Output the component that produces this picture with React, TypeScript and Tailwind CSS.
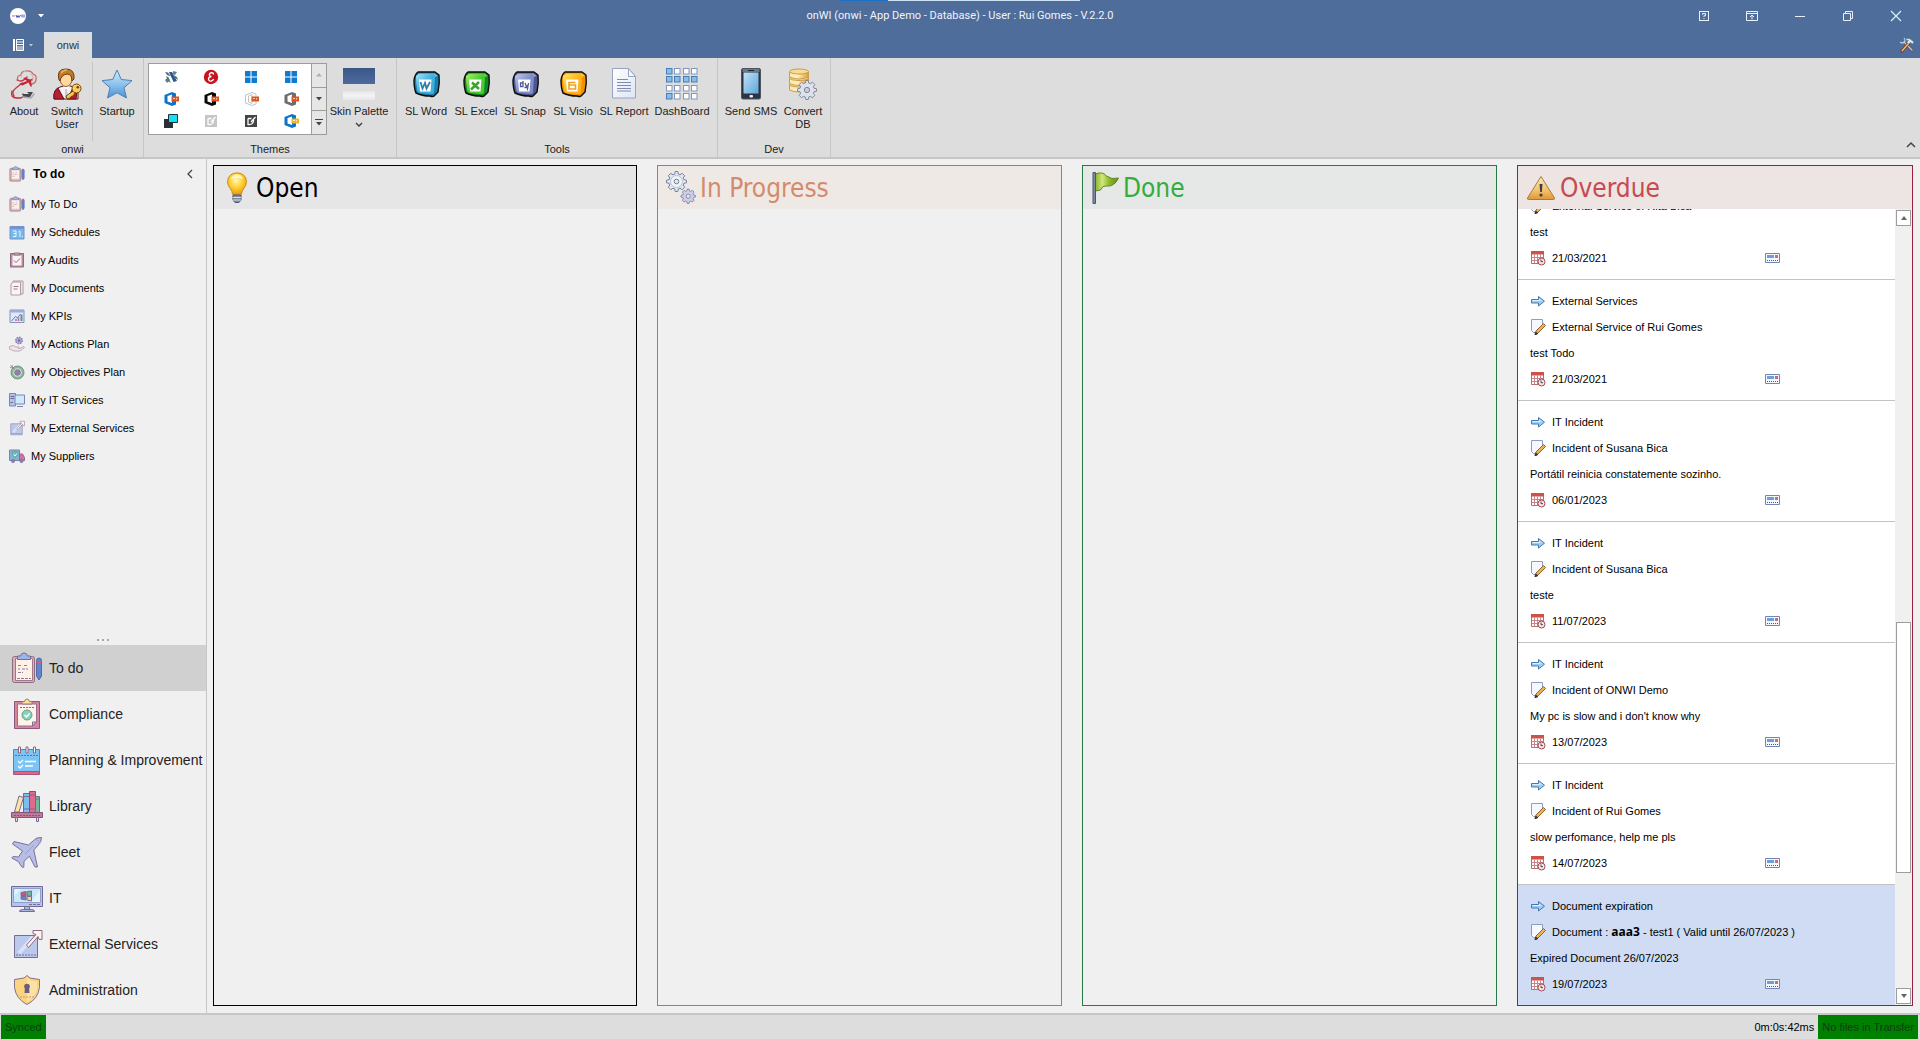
import { useState, type ReactNode } from 'react';
import clsx from 'clsx';

/* ---------- Title bar icons ---------- */

const HelpIcon = () => (
  <svg width="12" height="12" viewBox="0 0 12 12" fill="none" stroke="#e8f1fa">
    <rect x="1.5" y="1.5" width="9" height="9" />
    <path d="M4.5 4.8V3.5h3v2.2H6V7M6 8v1" />
  </svg>
);

const RibbonModeIcon = () => (
  <svg width="12" height="12" viewBox="0 0 12 12" fill="none" stroke="#e8f1fa">
    <path d="M.5 1.5h11v9H.5zM.5 3.5h11M6 9.5V5M4 7l2-2 2 2" />
  </svg>
);

const MinimizeIcon = () => (
  <svg width="12" height="12" viewBox="0 0 12 12" stroke="#e8f1fa">
    <path d="M1 6.5h10" />
  </svg>
);

const RestoreIcon = () => (
  <svg width="12" height="12" viewBox="0 0 12 12" fill="none" stroke="#e8f1fa">
    <path d="M1.5 3.5h7v7h-7zM3.5 3.5v-2h7v7h-2" />
  </svg>
);

const CloseIcon = () => (
  <svg width="12" height="12" viewBox="0 0 12 12" stroke="#d8f2fa" strokeWidth="1.2">
    <path d="M1 1l10 10M11 1L1 11" />
  </svg>
);

const ToolsIcon = () => (
  <svg width="16" height="16" viewBox="0 0 16 16" strokeLinecap="round">
    <path d="M5 5l8 8" stroke="#6b4a52" strokeWidth="2.6" />
    <path d="M5 5l8 8" stroke="#c8c9d8" strokeWidth="1.3" />
    <path d="M1.5 5.5L4 6l2-2-.6-2.6" fill="none" stroke="#a9cfdd" strokeWidth="1.4" />
    <path d="M10 6l-7 8" stroke="#7b3a1c" strokeWidth="3" />
    <path d="M10 6l-6.800 7.800" stroke="#f5bd74" strokeWidth="1.400" />
    <path d="M6 2.500q4-2.500 7 1l2 1.500-1.500 2-2-1.600L9.500 7 8 5.500l1.200-1.700z" fill="#dff0f4" stroke="#5c7480" strokeWidth=".6" />
  </svg>
);

/* ---------- Ribbon icons ---------- */

const AboutIcon = () => (
  <svg width="32" height="32" viewBox="0 0 32 32" fill="none" strokeLinecap="round">
    <path d="M10 12q-2-4 3-5 0-4 5-4 5-1 7 3 4 1 3 6-1 4-5 4" stroke="#c4656b" strokeWidth="1.200" />
    <path d="M18 3q-5 1-5 6M23 6q4 3 1 8" stroke="#dca0a4" />
    <path d="M9 12q5 3 10-3M6 28q-3-4 2-8t6-5" stroke="#c53a46" strokeWidth="1.400" />
    <path d="M4 23q-2 7 5 7h4q4-2 2-4" stroke="#b92c3d" strokeWidth="1.300" />
    <path d="M11 16l8-3-4-3 2-.500 5 2 3-1-2 3 1 5-1.500 0-2-4-6 3z" fill="#c22736" />
    <path d="M14 26l7 0-2-2 6 0-3 5-5 1z" fill="#44464e" />
    <path d="M15 29l8 1 3-4" stroke="#a8a9ae" strokeWidth="1.600" />
  </svg>
);

const SwitchUserIcon = () => (
  <svg width="32" height="32" viewBox="0 0 32 32">
    <path d="M3 31q-1-10 6-12l4-1h6q7 1 8 6v7z" fill="#f2f2f5" stroke="#5e1420" />
    <path d="M3 31q-1-8 4-11l6 11zM25 31l1-8-4-3-6 11z" fill="#b51e35" stroke="#6e0f1e" />
    <path d="M12 18l3 4 4-4-3-2z" fill="#fff" />
    <path d="M14 21l2 0 1 8-2 2-1-2z" fill="#c9cad4" />
    <ellipse cx="15" cy="11" rx="6" ry="7.500" fill="#ffd9a0" stroke="#9a5a1e" />
    <path d="M8 12Q5 1 15 1q9 0 8 10l-2 2Q21 6 16 6 10 7 9 13z" fill="#c27a2b" stroke="#6c3a10" />
    <path d="M10 5q2-3 6-3" stroke="#eab25e" strokeWidth="1.500" fill="none" />
    <path d="M22 23l-7 5 1 3 3-1 1-1.500 2-.5 2-3" fill="#f7c552" stroke="#75440b" />
    <circle cx="25.500" cy="20.500" r="4.500" fill="#f9cd62" stroke="#75440b" />
    <circle cx="26.800" cy="19.200" r="1.300" fill="#6f430f" />
  </svg>
);

const StarIcon = () => (
  <svg width="32" height="32" viewBox="0 0 32 32">
    <defs>
      <linearGradient id="star" x1="0" y1="0" x2="0" y2="1">
        <stop offset="0" stopColor="#d2ebfb" />
        <stop offset=".5" stopColor="#8fc3ec" />
        <stop offset="1" stopColor="#4b93d6" />
      </linearGradient>
    </defs>
    <path d="M16 2l4.300 9.500L31 12.600l-8 7.200L25.500 30 16 24.800 6.500 30 9 19.800l-8-7.200 10.700-1.100z" fill="url(#star)" stroke="#4d7fb8" strokeLinejoin="round" />
  </svg>
);

function BlobIcon({ id, light, mid, dark, children }: { id: string; light: string; mid: string; dark: string; children: ReactNode }) {
  return (
    <svg width="32" height="32" viewBox="0 0 32 32">
      <defs>
        <linearGradient id={id} x1="0" y1="0" x2="1" y2="1">
          <stop offset="0" stopColor={light} />
          <stop offset=".5" stopColor={mid} />
          <stop offset="1" stopColor={mid} />
        </linearGradient>
      </defs>
      <path d="M8 4h17l4 3q1 8-1 17l-4 4q-1 1-4 0-8 0-14-3-2-5-2-13 1-6 4-8z" fill={dark} stroke="#0c0c0c" strokeWidth="1.400" strokeLinejoin="round" />
      <path d="M8.500 5.500h16l3 2.500-3 1H7z" fill={light} opacity=".7" />
      <path d="M6 8q2-2 5-2h12q2 0 2 3l-1 15q0 2-3 2l-11-1q-3-1-3-4-1-7-1-13z" fill={`url(#${id})`} />
      <path d="M9 11.500h12.500l-1 12H10z" fill="#fff" />
      {children}
    </svg>
  );
}

const WordIcon = () => (
  <BlobIcon id="word" light="#a4e2f8" mid="#3fb0dc" dark="#1a7fae">
    <path d="M10.500 14l2 6.500 2.500-5.500 1.500 5.500 3.500-6.500" fill="none" stroke="#2b7fa8" strokeWidth="1.800" />
  </BlobIcon>
);

const ExcelIcon = () => (
  <BlobIcon id="excel" light="#a8f266" mid="#48cb32" dark="#128a20">
    <path d="M12 14.500l7 6.500M19 14l-8 7.500" fill="none" stroke="#3da32c" strokeWidth="2.500" />
  </BlobIcon>
);

const SnapIcon = () => (
  <BlobIcon id="snap" light="#c0c9f0" mid="#7f8cc6" dark="#4c568c">
    <path d="M14 15h-2.500v3.500H14zM14 13v6M16 15l2.500 6 1-6M15.500 20l4-3" fill="none" stroke="#4f5c98" strokeWidth="1.300" />
  </BlobIcon>
);

const VisioIcon = () => (
  <BlobIcon id="visio" light="#ffe468" mid="#ffb41c" dark="#f09200">
    <path d="M18.500 14.500h-6.500v6.500h6.500v-4h-3.500M12 17h3" fill="none" stroke="#eda21c" strokeWidth="1.600" />
  </BlobIcon>
);

const ReportIcon = () => (
  <svg width="32" height="32" viewBox="0 0 32 32">
    <defs>
      <linearGradient id="paper" x1="0" y1="0" x2="1" y2="1">
        <stop offset="0" stopColor="#ffffff" />
        <stop offset="1" stopColor="#dfe5f6" />
      </linearGradient>
    </defs>
    <path d="M4.500 .5h16l7 8v21.500h-23z" fill="url(#paper)" stroke="#98a2c2" />
    <path d="M20.500 .5l7 8h-7z" fill="#f4f6fc" stroke="#98a2c2" />
    <path d="M9 11.500h11M9 14.500h14M9 17.500h14M9 20.500h14M9 23h14" stroke="#7a8cb0" />
  </svg>
);

const DashboardIcon = () => {
  const cells = ['bwww', 'bbbb', 'wwww', 'bwww'];
  const xs = [0.5, 8.5, 17.5, 25.5];
  const ys = [0.5, 8.5, 17.5, 25.5];
  return (
    <svg width="32" height="32" viewBox="0 0 32 32">
      {cells.map((row, r) =>
        row.split('').map((cell, c) => (
          <rect key={`${r}${c}`} x={xs[c]} y={ys[r]} width="5.500" height="5.500" fill={cell === 'b' ? '#86bdea' : '#fff'} stroke={cell === 'b' ? '#4a7db4' : '#8196bd'} />
        ))
      )}
    </svg>
  );
};

const PhoneIcon = () => (
  <svg width="32" height="32" viewBox="0 0 32 32">
    <defs>
      <linearGradient id="screen" x1="0" y1="0" x2="1" y2="1">
        <stop offset="0" stopColor="#bfe3f8" />
        <stop offset="1" stopColor="#5fa5d8" />
      </linearGradient>
    </defs>
    <rect x="6.500" y=".5" width="19" height="30.500" rx="1.500" fill="#2d3340" stroke="#4c5464" />
    <rect x="7.500" y="1" width="17" height="3" fill="#6d7586" />
    <rect x="8.500" y="4.500" width="15" height="21" fill="url(#screen)" />
    <path d="M13 2.500h6" stroke="#20242c" />
    <rect x="14.500" y="27" width="3.500" height="2.500" rx="1" fill="#eee" />
  </svg>
);

const GEAR_D =
  'M8.700 0h2.600l.5 2.600 1.700.7L15.700 1.800l2.500 2.500-1.500 2.200.7 1.700 2.600.5v2.600l-2.600.5-.7 1.700 1.500 2.200-2.500 2.500-2.200-1.500-1.700.7-.5 2.600H8.700l-.5-2.600-1.700-.7-2.200 1.500-2.500-2.500 1.500-2.200-.7-1.700L0 11.300V8.700l2.600-.5.7-1.700L1.800 4.300l2.500-2.500 2.200 1.500 1.700-.7z';

const ConvertDbIcon = () => (
  <svg width="32" height="32" viewBox="0 0 32 32">
    <defs>
      <linearGradient id="db" x1="0" y1="0" x2="1" y2="0">
        <stop offset="0" stopColor="#fbe6a8" />
        <stop offset=".4" stopColor="#fff2c8" />
        <stop offset="1" stopColor="#dd9d35" />
      </linearGradient>
    </defs>
    {[16.500, 10, 3.500].map((y) => (
      <g key={y} stroke="#cf9a48">
        <path d={`M2.500 ${y}v5.500q9 4 19 0v-5.500z`} fill="url(#db)" />
        <ellipse cx="12" cy={y} rx="9.500" ry="2.500" fill="#f7dc95" />
      </g>
    ))}
    <g transform="translate(10.500 12.500) scale(.95)">
      <path d={GEAR_D} fill="#dde1ec" stroke="#7c849c" />
      <circle cx="10" cy="10" r="2.800" fill="#c7ccda" stroke="#7c849c" />
    </g>
  </svg>
);

const PaletteIcon = () => (
  <svg width="32" height="32" viewBox="0 0 32 32">
    <defs>
      <linearGradient id="fade" x1="0" y1="0" x2="0" y2="1">
        <stop offset="0" stopColor="#e6e6e6" />
        <stop offset=".5" stopColor="#f3f3f3" />
        <stop offset="1" stopColor="#e6e6e6" />
      </linearGradient>
      <linearGradient id="navy" x1="0" y1="0" x2="0" y2="1">
        <stop offset="0" stopColor="#3a5788" />
        <stop offset="1" stopColor="#4c6b9c" />
      </linearGradient>
    </defs>
    <path d="M0 0h32v16H0z" fill="url(#navy)" />
    <path d="M0 16h32v7H0z" fill="#dedede" />
    <path d="M0 23h32v9H0z" fill="url(#fade)" />
  </svg>
);

/* ---------- Skin gallery glyphs ---------- */

const DxSkin = () => (
  <svg width="16" height="16" viewBox="0 0 16 16">
    <path d="M2 3l3 .5 3 4L4 6z" fill="#5d6c8a" />
    <path d="M6 3l3 0 5 9-3.500 1z" fill="#28588f" />
    <path d="M10 2l4 1-2 3-2-1zM2 11l3-3 2 3-3 3z" fill="#6c7a92" />
    <path d="M3 7l2 1 3 6-3-2zM11 6l3 2 1 3-3-2z" fill="#4d7a6e" />
  </svg>
);

const RedSkin = () => (
  <svg width="16" height="16" viewBox="0 0 16 16" fill="none" stroke="#fff" strokeWidth="1.400">
    <circle cx="8" cy="8" r="7.200" fill="#c7141f" stroke="none" />
    <path d="M10.500 5.500q0-2-2-1.800-2.500.7-2 2.800.5 1 2 1-3 .3-3 2.500.3 2.500 2.800 2 1.800-.5 2.300-2" />
  </svg>
);

const WindowsSkin = () => (
  <svg width="16" height="16" viewBox="0 0 16 16" fill="#0f7bd0">
    <path d="M2 2h5.500v5.500H2zM8.500 2H14v5.500H8.500zM2 8.500h5.500V14H2zM8.500 8.500H14V14H8.500z" />
  </svg>
);

const OfficeSkin = ({ color, badge, outline }: { color: string; badge: string; outline?: boolean }) => (
  <svg width="16" height="16" viewBox="0 0 16 16">
    {outline ? (
      <path d="M2.500 4L9 1.500l4 1.500v10L9 14.500 2.500 12zM5.500 5v6L9 12.500v-9z" fill="#fff" stroke={color} />
    ) : (
      <path d="M1.500 4L9 1l4 1.500v11L9 15l-7.500-3zM4.500 5v5.500L9 12V3.500z" fill={color} fillRule="evenodd" />
    )}
    <path d="M8.500 5.500H16v5H8.500z" fill={badge} />
    <path d="M10 7.500h2M13.500 7v1.500" stroke="#fff" opacity=".7" />
  </svg>
);

const SquaresSkin = () => (
  <svg width="16" height="16" viewBox="0 0 16 16">
    <path d="M1 6h9v9H1z" fill="#2c2f33" />
    <path d="M5.500 1.500h9v8h-9z" fill="#15dff2" stroke="#1c3438" />
  </svg>
);

const NoteSkin = ({ color }: { color: string }) => (
  <svg width="16" height="16" viewBox="0 0 16 16" fill="none">
    <path d="M2 2h12v12H2z" fill={color} />
    <path d="M5 5.500v6q5 .5 5.500-3.500V7M5 5.500h3.500M8 9l4.500-5" stroke="#fff" strokeWidth="1.300" />
  </svg>
);

const skins = [
  { name: 'DX', icon: <DxSkin /> },
  { name: 'Red', icon: <RedSkin /> },
  { name: 'Windows', icon: <WindowsSkin /> },
  { name: 'Windows Light', icon: <WindowsSkin /> },
  { name: 'Office Colorful', icon: <OfficeSkin color="#0f74c8" badge="#e2521e" /> },
  { name: 'Office Black', icon: <OfficeSkin color="#0a0a0a" badge="#e2521e" /> },
  { name: 'Office White', icon: <OfficeSkin color="#c2c2c2" badge="#e2521e" outline /> },
  { name: 'Office Dark', icon: <OfficeSkin color="#6d6d6d" badge="#e2521e" /> },
  { name: 'Squares', icon: <SquaresSkin /> },
  { name: 'Note Light', icon: <NoteSkin color="#c6c6c6" /> },
  { name: 'Note Dark', icon: <NoteSkin color="#444444" /> },
  { name: 'Office Yellow', icon: <OfficeSkin color="#0f74c8" badge="#efb52b" /> },
];

/* ---------- Navigation icons, shared by the small and large lists ---------- */

const INK = '#7d6a93';

function NavSvg({ size, children }: { size: number; children: ReactNode }) {
  return (
    <svg width={size} height={size} viewBox="0 0 32 32" fill="none" stroke={INK} strokeLinejoin="round" className="shrink-0">
      {children}
    </svg>
  );
}

const TodoIcon = ({ size = 32 }: { size?: number }) => (
  <NavSvg size={size}>
    <rect x="1.500" y="4.500" width="22" height="26" rx="2" fill="#d6b3b5" stroke="#8c6a80" />
    <path d="M4.500 6.500h17v22h-17z" fill="#fff1e6" stroke="#a37886" />
    <path d="M6.500 7.500V4h3q.5-3 3.500-3t3.500 3h3v3.500z" fill="#9db6e8" />
    <path d="M7 13.500h4M13 13.500h4M7 17h2M11 17h6M7 20.500h5M6 26.500h14" stroke="#8c7aa0" strokeDasharray="3 1" />
    <path d="M25.500 9q0-3 2.500-3t2.500 3v15L28 28l-2.500-4z" fill="#5f86cf" stroke="#56669e" />
    <path d="M25.500 10h5" stroke="#d0607c" strokeWidth="2" />
  </NavSvg>
);

const ComplianceIcon = ({ size = 32 }: { size?: number }) => (
  <NavSvg size={size}>
    <path d="M3.500 3.500h25v27h-25z" fill="#d983a0" stroke="#8d5a7e" />
    <path d="M6.500 6h19v18l-4 4h-15z" fill="#fff4e8" stroke="#97718f" />
    <path d="M25.500 24h-4v4z" fill="#f0c6b8" />
    <path d="M11 6V3.500h2.500Q14 1 16 1t2.500 2.500H21V6z" fill="#ffdf9c" stroke="#9b7480" />
    <path d="M9 9.500h14" strokeDasharray="2 1" />
    <circle cx="16" cy="17" r="5" fill="#86d3b6" stroke="#6a9aa0" />
    <path d="M13.500 17l2 2 3-3.500" stroke="#fff" strokeWidth="1.500" />
  </NavSvg>
);

const PlanningIcon = ({ size = 32 }: { size?: number }) => (
  <NavSvg size={size}>
    <path d="M2.500 5.500h26v25h-26z" fill="#7cc4f5" stroke="#6a7bb5" />
    <path d="M3 27.500h25v3H3z" fill="#e5637f" stroke="#a3577e" />
    <path d="M4 11.500h24" stroke="#5671ad" strokeDasharray="2 1" />
    <path d="M7.500 3h2v6h-2zM15 3h2v6h-2zM22.500 3h2v6h-2z" fill="#fff" stroke="#8d6480" />
    <path d="M7 17l2 2 3-3M7 22l2 2 3-3M14 17.500h11M14 22h8" stroke="#fff" strokeWidth="1.300" />
  </NavSvg>
);

const LibraryIcon = ({ size = 32 }: { size?: number }) => (
  <NavSvg size={size}>
    <path d="M8 6l4.500 1.500L8 22H3.500z" fill="#fae6a2" />
    <path d="M12.500 3.500h6v19h-6z" fill="#77c0f2" stroke="#5870a8" />
    <path d="M18.500 1.500h6v21h-6z" fill="#e2688c" stroke="#8c4a78" />
    <path d="M24.500 6.500h4v16h-4z" fill="#6fb99f" stroke="#517b80" />
    <path d="M13 6.500h5M13 19h5M19 5h5M19 19h5M25 9h4" />
    <path d="M.5 22.500h31v5H.5z" fill="#c07898" stroke="#84547c" />
    <path d="M3 25.500h26" stroke="#84547c" strokeDasharray="2 1" />
    <path d="M4.500 27.500h2v4h-2zM25.500 27.500h2v4h-2z" fill="#f0d8da" />
  </NavSvg>
);

const FleetIcon = ({ size = 32 }: { size?: number }) => (
  <NavSvg size={size}>
    <path d="M30.500 1.500q-5-.5-8 3l-5 4.500L3 5.500 1.500 8l10 7-4 6L2 20.500.8 22l6.500 3.500L11 31.200h1.800l.2-6 5.500-5L24 31h2.500L22.800 14l4.500-5q3.500-4 3.200-7.500z" fill="#b7bee6" stroke="#7b6f98" />
    <path d="M14 18l9-9" stroke="#8f8fc0" strokeDasharray="2 1" />
    <path d="M24 3q4 1 5 5" stroke="#8fa4d8" />
  </NavSvg>
);

const ItIcon = ({ size = 32 }: { size?: number }) => (
  <NavSvg size={size}>
    <path d="M.5 4.500h31v20H.5z" fill="#b5c4ec" stroke="#71699c" />
    <path d="M2.500 6.500h27v14h-27z" fill="#c9e9fa" stroke="#8fa0cc" />
    <path d="M20 20L29 8v12zM3 14l7-7H4z" fill="#e4f5fd" stroke="none" />
    <path d="M10 10.500l5-1v4h-5z" fill="#c65c7c" />
    <path d="M16 9.500l4.500-.5v5H16z" fill="#6ab79a" />
    <path d="M10 14.500h5V18l-5-1z" fill="#6c86c6" />
    <path d="M16 14.500h4.500V19L16 18z" fill="#f5d49a" />
    <path d="M13.500 24.500h5v3h-5zM8.500 29.500q0-2 3-2h9q3 0 3 2z" fill="#a9b6e0" />
    <path d="M18 22.500h11" strokeDasharray="3 1" />
  </NavSvg>
);

const ExternalIcon = ({ size = 32 }: { size?: number }) => (
  <NavSvg size={size}>
    <path d="M3.500 7.500h23v22h-23z" fill="#bcc8ec" stroke="#756c9c" />
    <path d="M8 25L22 9" stroke="#d8e2f8" strokeWidth="4" />
    <path d="M5 27h20" strokeDasharray="2 1" />
    <path d="M15.500 17L25 6.500l-3-1V2.500h9v9l-3-.2-1-2.800-9.500 11z" fill="#fff3ea" stroke="#8b6886" />
  </NavSvg>
);

const AdminIcon = ({ size = 32 }: { size?: number }) => (
  <NavSvg size={size}>
    <path d="M16 1.500l3 2.500 9.500 1.500v8Q27 25 16 30.500 5 25 3.500 13.500v-8L13 4z" fill="#fad480" stroke="#85708e" />
    <path d="M16 4l3 2.500 7 1v6Q25 23 16 28z" fill="#fbe2a6" stroke="none" />
    <circle cx="16" cy="12.500" r="2.800" fill="#6c5c80" stroke="none" />
    <path d="M14 13h4l.5 6h-5z" fill="#6c5c80" stroke="none" />
    <path d="M9 23h14" stroke="#c09a74" strokeDasharray="2 1" />
  </NavSvg>
);

const ScheduleIcon = () => (
  <NavSvg size={16}>
    <path d="M2 5h28v25H2z" fill="#74b9ec" stroke="#6c96cf" strokeWidth="2" />
    <path d="M2 5h28v5H2z" fill="#7c8fcf" stroke="none" />
    <path d="M8 14h6v11H8M9 19h5M19 16l3-2v12M26 25h2" stroke="#e8f6ff" strokeWidth="2" />
  </NavSvg>
);

const AuditIcon = () => (
  <NavSvg size={16}>
    <path d="M3 3h26v27H3z" fill="#b98fa5" stroke="#8f6a84" strokeWidth="2" />
    <path d="M7 7h18v20H7z" fill="#fbf1ee" stroke="none" />
    <path d="M11 6V2h10v4z" fill="#d9c0a8" stroke="#8f6a84" strokeWidth="2" />
    <path d="M10 17l4 4 8-8" stroke="#7d7490" strokeWidth="2" />
  </NavSvg>
);

const DocumentsIcon = () => (
  <NavSvg size={16}>
    <path d="M8 2h20v26H8z" fill="#efe6e4" stroke="#b29aa6" strokeWidth="2" />
    <path d="M4 8l5-4h14v26H4z" fill="#fbf5f2" stroke="#b29aa6" strokeWidth="2" />
    <path d="M9 13h10M9 18h8" stroke="#8e8098" strokeWidth="2" />
  </NavSvg>
);

const KpiIcon = () => (
  <NavSvg size={16}>
    <path d="M2 4h28v25H2z" fill="#dfe8fa" stroke="#8890bf" strokeWidth="2" />
    <path d="M2 4h28v5H2z" fill="#a2a9d8" stroke="none" />
    <path d="M5 26l8-9 4 3 6-8" stroke="#6d78b5" strokeWidth="2" />
    <path d="M14 26v-4M19 26v-7" stroke="#bb6f8e" strokeWidth="3" />
    <path d="M25 26V13" stroke="#5c9a86" strokeWidth="4" />
  </NavSvg>
);

const ActionsIcon = () => (
  <NavSvg size={16}>
    <circle cx="20" cy="9" r="6.500" fill="#b3acd6" stroke="#857cac" strokeWidth="3" strokeDasharray="3 2" />
    <circle cx="20" cy="9" r="2.500" fill="#77709e" stroke="none" />
    <path d="M1 21l7-2 6 3h6l-1 3h3l7-4 2 2-9 7-12 0-9-4z" fill="#f5e4e0" stroke="#a39ab2" strokeWidth="1.500" />
  </NavSvg>
);

const ObjectivesIcon = () => (
  <NavSvg size={16}>
    <circle cx="17" cy="17" r="13" fill="#8fb8a3" stroke="#75947f" strokeWidth="2" />
    <circle cx="17" cy="17" r="9" fill="#e0e8d8" stroke="#7fa08c" />
    <circle cx="17" cy="17" r="6" fill="#8d80a6" stroke="#68708c" />
    <path d="M3 3l13 13M2 7l5 1-1-6" stroke="#b3868e" strokeWidth="2" />
  </NavSvg>
);

const ServicesIcon = () => (
  <NavSvg size={16}>
    <path d="M1 3h12v25H1z" fill="#b5c2ea" stroke="#7a84b8" strokeWidth="2" />
    <path d="M3 9h7M3 13h7M3 21h5" stroke="#616a9c" strokeWidth="2" />
    <path d="M12 6h19v18H12z" fill="#cdeafa" stroke="#7a84b8" strokeWidth="2" />
    <path d="M16 29h12" stroke="#7a84b8" strokeWidth="2" />
  </NavSvg>
);

const SuppliersIcon = () => (
  <NavSvg size={16}>
    <path d="M1 4h20v21H1z" fill="#7fb2dd" stroke="#7686b8" strokeWidth="2" />
    <path d="M6 8q5 0 6-1 1 1 6 1 0 9-6 12-6-3-6-12z" fill="#74bda0" stroke="#5f8f94" />
    <path d="M9 13l3 3 4-5" stroke="#fff" strokeWidth="2" />
    <path d="M21 12h6l4 7v6H21z" fill="#c9789a" stroke="#95658c" strokeWidth="2" />
    <circle cx="8" cy="26" r="3.500" fill="#8a80a6" />
    <circle cx="25" cy="26" r="3.500" fill="#8a80a6" />
  </NavSvg>
);

/* ---------- Board icons ---------- */

const BulbIcon = () => (
  <svg width="22" height="32" viewBox="0 0 22 32">
    <defs>
      <radialGradient id="bulb" cx=".45" cy=".35" r=".7">
        <stop offset="0" stopColor="#fff8b8" />
        <stop offset=".5" stopColor="#fdd02f" />
        <stop offset="1" stopColor="#e8960c" />
      </radialGradient>
    </defs>
    <path d="M11 .8q-9 .6-9.500 9 .2 4 3 7 2 3 2 5.500h9q0-2.500 2-5.500 2.800-3 3-7-.5-8.400-9.500-9z" fill="url(#bulb)" stroke="#cf8a1c" />
    <path d="M5 7q1-4 6-4.500 5 .5 6 4.500-6-2-12 0z" fill="#fffbe0" opacity=".8" />
    <path d="M7 23h8v5l-2 2.500H9L7 28z" fill="#7d879d" stroke="#525b70" />
    <path d="M7 25.500h8M7 28h8" stroke="#dfe4ee" />
  </svg>
);

const GearsIcon = () => (
  <svg width="30" height="34" viewBox="0 0 30 34" stroke="#75839b">
    <g transform="translate(.5 .5)">
      <path d={GEAR_D} fill="#dfe7f0" />
      <circle cx="10" cy="10" r="6" fill="#eef3f8" stroke="#b9c5d4" />
      <circle cx="10" cy="10" r="2.300" fill="#e9e6e4" />
    </g>
    <g transform="translate(15 18) scale(.72)" stroke="#6b6d98">
      <path d={GEAR_D} fill="#cfd0e8" />
      <circle cx="10" cy="10" r="3" fill="#e9e6e4" />
    </g>
  </svg>
);

const FlagIcon = () => (
  <svg width="28" height="34" viewBox="0 0 28 34">
    <defs>
      <linearGradient id="flag" x1="0" y1="0" x2="1" y2="0">
        <stop offset="0" stopColor="#8bb52a" />
        <stop offset=".3" stopColor="#d2e779" />
        <stop offset=".6" stopColor="#8fb72c" />
        <stop offset="1" stopColor="#5f8d17" />
      </linearGradient>
    </defs>
    <path d="M4.500 3q7-3 11 2 5 4 12 2-4 9-12 8-4-1-6 4l-5 1z" fill="url(#flag)" stroke="#5d8420" />
    <path d="M2 1.500h2.500v31H2z" fill="#7c8ba3" stroke="#4a566b" />
  </svg>
);

const WarningIcon = () => (
  <svg width="30" height="26" viewBox="0 0 30 26">
    <defs>
      <linearGradient id="warn" x1="0" y1="0" x2="0" y2="1">
        <stop offset="0" stopColor="#fdeebb" />
        <stop offset=".6" stopColor="#f4c169" />
        <stop offset="1" stopColor="#dd973a" />
      </linearGradient>
    </defs>
    <path d="M15 1.500L28.500 23q.3 1.500-1 1.500h-25q-1.300 0-1-1.500z" fill="url(#warn)" stroke="#a87a42" strokeLinejoin="round" />
    <path d="M13.500 9h3l-.7 8h-1.600z" fill="#3c3c44" />
    <circle cx="15" cy="20" r="1.600" fill="#3c3c44" />
  </svg>
);

const ArrowIcon = () => (
  <svg width="16" height="16" viewBox="0 0 16 16">
    <path d="M1.500 6.500h7v-3l6 4.700-6 4.800V10h-7z" fill="#9cd0f2" stroke="#4878b4" strokeLinejoin="round" />
    <path d="M2.500 7.500h7v-1.500l2 2" fill="none" stroke="#dcf0fc" />
  </svg>
);

const EditIcon = () => (
  <svg width="16" height="16" viewBox="0 0 16 16">
    <path d="M1.500.5h11v9l-4 4h-5l-2-2z" fill="#f5f8fe" stroke="#8d9cc4" />
    <path d="M5 15.500L6 12l7.500-7.500 2 2L8 14z" fill="#eab353" stroke="#94652a" strokeLinejoin="round" />
    <path d="M5 15.700l.8-2.500 2 1.500z" fill="#3d3240" stroke="#3d3240" />
  </svg>
);

const DateIcon = () => (
  <svg width="16" height="16" viewBox="0 0 16 16">
    <path d="M1.500 1.500h12v12h-12z" fill="#fff" stroke="#b96a6a" />
    <path d="M1 1h13v3.500H1z" fill="#cf5148" />
    <path d="M1.500 7.500h12M1.500 10.500h12M4.500 4.500v9M7.500 4.500v9M10.500 4.500v9" stroke="#c8848a" />
    <circle cx="11.500" cy="11.500" r="3.500" fill="#f6e9ea" stroke="#a14750" />
    <path d="M11 9.500v2.200h2" fill="none" stroke="#444" />
  </svg>
);

const CardIcon = () => (
  <svg width="15" height="10" viewBox="0 0 15 10">
    <path d="M.5.5h14v9H.5z" fill="#f4f7fc" stroke="#7385b8" />
    <path d="M2 2h7v3H2z" fill="#6f9fd8" />
    <path d="M10 2h3v3h-3z" fill="#cf6a6e" />
    <path d="M2 7.500h11" stroke="#4c5680" strokeDasharray="1 1" />
  </svg>
);

/* ---------- Data ---------- */

const myItems = [
  { label: 'My To Do', icon: <TodoIcon size={16} /> },
  { label: 'My Schedules', icon: <ScheduleIcon /> },
  { label: 'My Audits', icon: <AuditIcon /> },
  { label: 'My Documents', icon: <DocumentsIcon /> },
  { label: 'My KPIs', icon: <KpiIcon /> },
  { label: 'My Actions Plan', icon: <ActionsIcon /> },
  { label: 'My Objectives Plan', icon: <ObjectivesIcon /> },
  { label: 'My IT Services', icon: <ServicesIcon /> },
  { label: 'My External Services', icon: <ExternalIcon size={16} /> },
  { label: 'My Suppliers', icon: <SuppliersIcon /> },
];

const modules = [
  { label: 'To do', icon: TodoIcon },
  { label: 'Compliance', icon: ComplianceIcon },
  { label: 'Planning & Improvement', icon: PlanningIcon },
  { label: 'Library', icon: LibraryIcon },
  { label: 'Fleet', icon: FleetIcon },
  { label: 'IT', icon: ItIcon },
  { label: 'External Services', icon: ExternalIcon },
  { label: 'Administration', icon: AdminIcon },
];

type Task = { kind?: string; title: ReactNode; note: string; date: string };

const overdue: Task[] = [
  { title: 'External Service of Rita Bica', note: 'test', date: '21/03/2021' },
  { kind: 'External Services', title: 'External Service of Rui Gomes', note: 'test Todo', date: '21/03/2021' },
  { kind: 'IT Incident', title: 'Incident of Susana Bica', note: 'Portátil reinicia constatemente sozinho.', date: '06/01/2023' },
  { kind: 'IT Incident', title: 'Incident of Susana Bica', note: 'teste', date: '11/07/2023' },
  { kind: 'IT Incident', title: 'Incident of ONWI Demo', note: "My pc is slow and i don't know why", date: '13/07/2023' },
  { kind: 'IT Incident', title: 'Incident of Rui Gomes', note: 'slow perfomance, help me pls', date: '14/07/2023' },
  {
    kind: 'Document expiration',
    title: (
      <>
        Document : <b className="font-['Open_Sans'] text-xs leading-none">aaa3</b> - test1 ( Valid until 26/07/2023 )
      </>
    ),
    note: 'Expired Document 26/07/2023',
    date: '19/07/2023',
  },
];

/* ---------- Pieces ---------- */

function RibbonButton({ label, icon, className, arrow }: { label: ReactNode; icon: ReactNode; className: string; arrow?: boolean }) {
  return (
    <button type="button" className={clsx('flex shrink-0 flex-col items-center pt-[10px] hover:bg-[#cfcfcf]', className)}>
      {icon}
      <span className="mt-[5px] text-center leading-[13px] whitespace-nowrap">{label}</span>
      {arrow && (
        <svg width="8" height="6" viewBox="0 0 8 6" className="mt-1" fill="none" stroke="#444">
          <path d="M1 1l3 3 3-3" strokeWidth="1.500" />
        </svg>
      )}
    </button>
  );
}

function RibbonGroup({ title, className, children }: { title: string; className?: string; children: ReactNode }) {
  return (
    <section className={clsx('flex flex-col border-r border-[#c6c6c6]', className)}>
      <div className="flex h-[83px]">{children}</div>
      <h2 className="text-center leading-4">{title}</h2>
    </section>
  );
}

function TaskCard({ task, selected }: { task: Task; selected?: boolean }) {
  return (
    <li className={clsx('shrink-0 px-3 py-2', selected ? 'bg-[#cfdcf4]' : 'border-b border-[#c3c3c3] bg-white')}>
      {task.kind && (
        <div className="flex h-[26px] items-center gap-[6px]">
          <ArrowIcon />
          {task.kind}
        </div>
      )}
      <div className="flex h-[26px] items-center gap-[6px]">
        <EditIcon />
        <p>{task.title}</p>
      </div>
      <p className="leading-[26px]">{task.note}</p>
      <div className="flex h-[26px] items-center">
        <span className="flex w-[235px] items-center gap-[6px]">
          <DateIcon />
          {task.date}
        </span>
        <CardIcon />
      </div>
    </li>
  );
}

function Column({ title, icon, className, headClass, children }: { title: string; icon: ReactNode; className: string; headClass: string; children?: ReactNode }) {
  return (
    <section className={clsx('flex min-h-0 min-w-0 flex-col border', className)}>
      <header className={clsx("flex h-[43px] shrink-0 items-center gap-1 px-2 font-['DejaVu_Sans_Condensed','Open_Sans',sans-serif]", headClass)}>
        {icon}
        <h2 className="text-[26px] leading-8">{title}</h2>
      </header>
      {children}
    </section>
  );
}

const windowButtons = [
  { label: 'Help', icon: <HelpIcon /> },
  { label: 'Ribbon display options', icon: <RibbonModeIcon /> },
  { label: 'Minimize', icon: <MinimizeIcon /> },
  { label: 'Restore', icon: <RestoreIcon /> },
  { label: 'Close', icon: <CloseIcon /> },
];

export default function App() {
  const [activeModule, setActiveModule] = useState('To do');

  return (
    <div className="flex h-screen w-full flex-col overflow-hidden bg-[#f0f0f0] font-['Liberation_Sans',Arial,sans-serif] text-[11px] text-black">
      {/* Title bar */}
      <div className="relative grid h-8 shrink-0 grid-cols-[1fr_auto_1fr] items-center bg-[#4e6d9b] text-[#f0f4fa]">
        <div className="absolute top-0 left-1/2 flex h-px w-60 -translate-x-1/2">
          <div className="w-12 bg-[#1c72c8]" />
          <div className="flex-1 bg-[#c9e2f5]" />
        </div>
        <div className="flex items-center gap-3 pl-[10px]">
          <svg width="16" height="16" viewBox="0 0 16 16">
            <circle cx="8" cy="8" r="8" fill="#fff" />
            <path d="M2 8h3" stroke="#c9bfe0" strokeWidth="2" />
            <path d="M6 7l1 2.500L8 7.500l1 2L10.500 7M12 6.500v3M14 6.500v3" fill="none" stroke="#4a52b8" />
          </svg>
          <svg width="6" height="4" viewBox="0 0 6 4" fill="#fff">
            <path d="M0 0h6L3 3.500z" />
          </svg>
        </div>
        <h1 className="font-['Roboto','Liberation_Sans',sans-serif]">onWI (onwi - App Demo - Database) - User : Rui Gomes - V.2.2.0</h1>
        <div className="flex justify-end">
          {windowButtons.map((b) => (
            <button key={b.label} type="button" aria-label={b.label} className="flex h-8 w-12 items-center justify-center hover:bg-white/10">
              {b.icon}
            </button>
          ))}
        </div>
      </div>

      {/* Tab strip */}
      <div className="flex h-[26px] shrink-0 items-stretch bg-[#4e6d9b]">
        <button type="button" aria-label="File" className="flex w-11 items-center gap-1 pl-3">
          <svg width="13" height="14" viewBox="0 0 13 14" fill="none" stroke="#fff">
            <path d="M2 1v12" strokeWidth="2" />
            <path d="M4.500 1.500h7v11h-7z" />
            <path d="M5 4h6M5 6.500h6M5 9h6M5 11h6" />
          </svg>
          <svg width="4" height="3" viewBox="0 0 4 3" fill="#b9cbe2">
            <path d="M0 0h4L2 2.500z" />
          </svg>
        </button>
        <button type="button" className="w-12 border-t border-[#cfe0f5] bg-[#dddddd] text-[#333]">
          onwi
        </button>
        <button type="button" aria-label="Customize" className="ml-auto pr-[5px]">
          <ToolsIcon />
        </button>
      </div>

      {/* Ribbon */}
      <div className="flex h-[101px] shrink-0 border-b-2 border-[#c6c6c6] bg-[#dddddd] text-[#222]">
        <RibbonGroup title="onwi" className="w-36 pr-px pl-[3px]">
          <RibbonButton label="About" icon={<AboutIcon />} className="w-[42px]" />
          <RibbonButton label={<>Switch<br />User</>} icon={<SwitchUserIcon />} className="w-11" />
          <div className="mt-1 ml-[3px] w-px bg-[#c6c6c6]" />
          <RibbonButton label="Startup" icon={<StarIcon />} className="w-12" />
        </RibbonGroup>

        <RibbonGroup title="Themes" className="w-[253px] px-1">
          <div className="mt-[5px] flex h-[72px] w-[179px] shrink-0 border border-[#9c9c9c] bg-white">
            <div className="grid flex-1 grid-cols-4 content-center gap-y-[6px] pl-[2px]">
              {skins.map((s) => (
                <button key={s.name} type="button" aria-label={s.name} className="flex h-4 items-center justify-center">
                  {s.icon}
                </button>
              ))}
            </div>
            <div className="flex w-[15px] flex-col divide-y divide-[#9c9c9c] border-l border-[#9c9c9c] bg-[#e6e6e6]">
              <button type="button" aria-label="Scroll up" className="flex flex-1 items-center justify-center">
                <svg width="6" height="4" fill="#b0b0b0"><path d="M0 3.500L3 0l3 3.500z" /></svg>
              </button>
              <button type="button" aria-label="Scroll down" className="flex flex-1 items-center justify-center">
                <svg width="6" height="4" fill="#444"><path d="M0 0h6L3 3.500z" /></svg>
              </button>
              <button type="button" aria-label="More skins" className="flex flex-1 items-center justify-center">
                <svg width="8" height="7" fill="#444"><path d="M0 0h8v1H0zM1 3h6L4 6.500z" /></svg>
              </button>
            </div>
          </div>
          <RibbonButton label="Skin Palette" icon={<PaletteIcon />} className="w-16" arrow />
        </RibbonGroup>

        <RibbonGroup title="Tools" className="px-1">
          <RibbonButton label="SL Word" icon={<WordIcon />} className="w-[50px]" />
          <RibbonButton label="SL Excel" icon={<ExcelIcon />} className="w-[50px]" />
          <RibbonButton label="SL Snap" icon={<SnapIcon />} className="w-12" />
          <RibbonButton label="SL Visio" icon={<VisioIcon />} className="w-12" />
          <RibbonButton label="SL Report" icon={<ReportIcon />} className="w-[54px]" />
          <RibbonButton label="DashBoard" icon={<DashboardIcon />} className="w-[62px]" />
        </RibbonGroup>

        <RibbonGroup title="Dev" className="px-1">
          <RibbonButton label="Send SMS" icon={<PhoneIcon />} className="w-[58px]" />
          <RibbonButton label={<>Convert<br />DB</>} icon={<ConvertDbIcon />} className="w-[46px]" />
        </RibbonGroup>

        <button type="button" aria-label="Collapse ribbon" className="mt-auto ml-auto px-1 pb-2">
          <svg width="10" height="8" viewBox="0 0 10 8" fill="none" stroke="#444" strokeWidth="1.500">
            <path d="M1 6l4-4 4 4" />
          </svg>
        </button>
      </div>

      <div className="flex min-h-0 flex-1">
        {/* Sidebar */}
        <aside className="flex w-[207px] shrink-0 flex-col border-r border-[#c6c6c6]">
          <div className="flex h-[31px] items-center pr-3 pb-px pl-[9px]">
            <TodoIcon size={16} />
            <h2 className="ml-2 text-xs font-bold">To do</h2>
            <button type="button" aria-label="Collapse navigation" className="ml-auto">
              <svg width="8" height="10" viewBox="0 0 8 10" fill="none" stroke="#444" strokeWidth="1.300">
                <path d="M6 1L2 5l4 4" />
              </svg>
            </button>
          </div>
          <nav>
            {myItems.map((item) => (
              <a key={item.label} href="#" className="flex h-7 items-center gap-[6px] pl-[9px] hover:bg-[#e2e2e2]">
                {item.icon}
                {item.label}
              </a>
            ))}
          </nav>

          <div className="mt-auto flex h-[6px] justify-center gap-[3px]">
            <i className="h-[2px] w-[2px] bg-[#a8a8a8]" />
            <i className="h-[2px] w-[2px] bg-[#a8a8a8]" />
            <i className="h-[2px] w-[2px] bg-[#a8a8a8]" />
          </div>
          <div className="flex flex-col">
            {modules.map(({ label, icon: Icon }) => (
              <button
                key={label}
                type="button"
                onClick={() => setActiveModule(label)}
                className={clsx(
                  'flex h-[46px] items-center gap-[6px] pl-[11px] text-sm whitespace-nowrap text-[#222]',
                  activeModule === label && 'bg-[#d0d0d0]'
                )}
              >
                <Icon />
                {label}
              </button>
            ))}
          </div>
        </aside>

        {/* Board */}
        <main className="grid min-w-0 flex-1 grid-cols-[424fr_405fr_415fr_396fr] grid-rows-1 gap-5 pt-[6px] pr-[7px] pb-[7px] pl-[6px]">
          <Column title="Open" icon={<BulbIcon />} className="border-black" headClass="bg-[#e6e6e6] pl-3 gap-2" />
          <Column title="In Progress" icon={<GearsIcon />} className="border-[#c8781c]" headClass="bg-[#efe9e6] text-[#d48a6c]" />
          <Column title="Done" icon={<FlagIcon />} className="border-[#267a44]" headClass="bg-[#e5e8e6] text-[#33ad3c]" />
          <Column title="Overdue" icon={<WarningIcon />} className="border-[#962040]" headClass="bg-[#ece5e4] text-[#c84a50]">
            <div className="flex min-h-0 flex-1">
              <ul className="flex min-w-0 flex-1 flex-col justify-end overflow-hidden">
                {overdue.map((task, i) => (
                  <TaskCard key={i} task={task} selected={i === overdue.length - 1} />
                ))}
              </ul>
              <div className="flex w-[17px] shrink-0 flex-col items-center py-px">
                <button type="button" aria-label="Scroll up" className="flex h-4 w-[15px] items-center justify-center border border-[#9c9c9c] bg-white">
                  <svg width="6" height="4" fill="#666"><path d="M0 4l3-4 3 4z" /></svg>
                </button>
                <div className="flex w-full flex-1 flex-col items-center">
                  <div className="flex-[397]" />
                  <div className="w-[15px] flex-[250] border border-[#9c9c9c] bg-white" />
                  <div className="flex-[115]" />
                </div>
                <button type="button" aria-label="Scroll down" className="flex h-4 w-[15px] items-center justify-center border border-[#9c9c9c] bg-white">
                  <svg width="6" height="4" fill="#666"><path d="M0 0h6L3 4z" /></svg>
                </button>
              </div>
            </div>
          </Column>
        </main>
      </div>

      {/* Status bar */}
      <footer className="flex h-[26px] shrink-0 items-stretch border-t-2 border-[#c6c6c6] bg-[#dddddd] pr-[2px] pl-px leading-6">
        <span className="bg-[#008000] px-1 text-[#123a12]">Synced</span>
        <span className="mr-1 ml-auto">0m:0s:42ms</span>
        <span className="bg-[#008000] px-1 text-[#123a12]">No files in Transfer</span>
      </footer>
    </div>
  );
}
